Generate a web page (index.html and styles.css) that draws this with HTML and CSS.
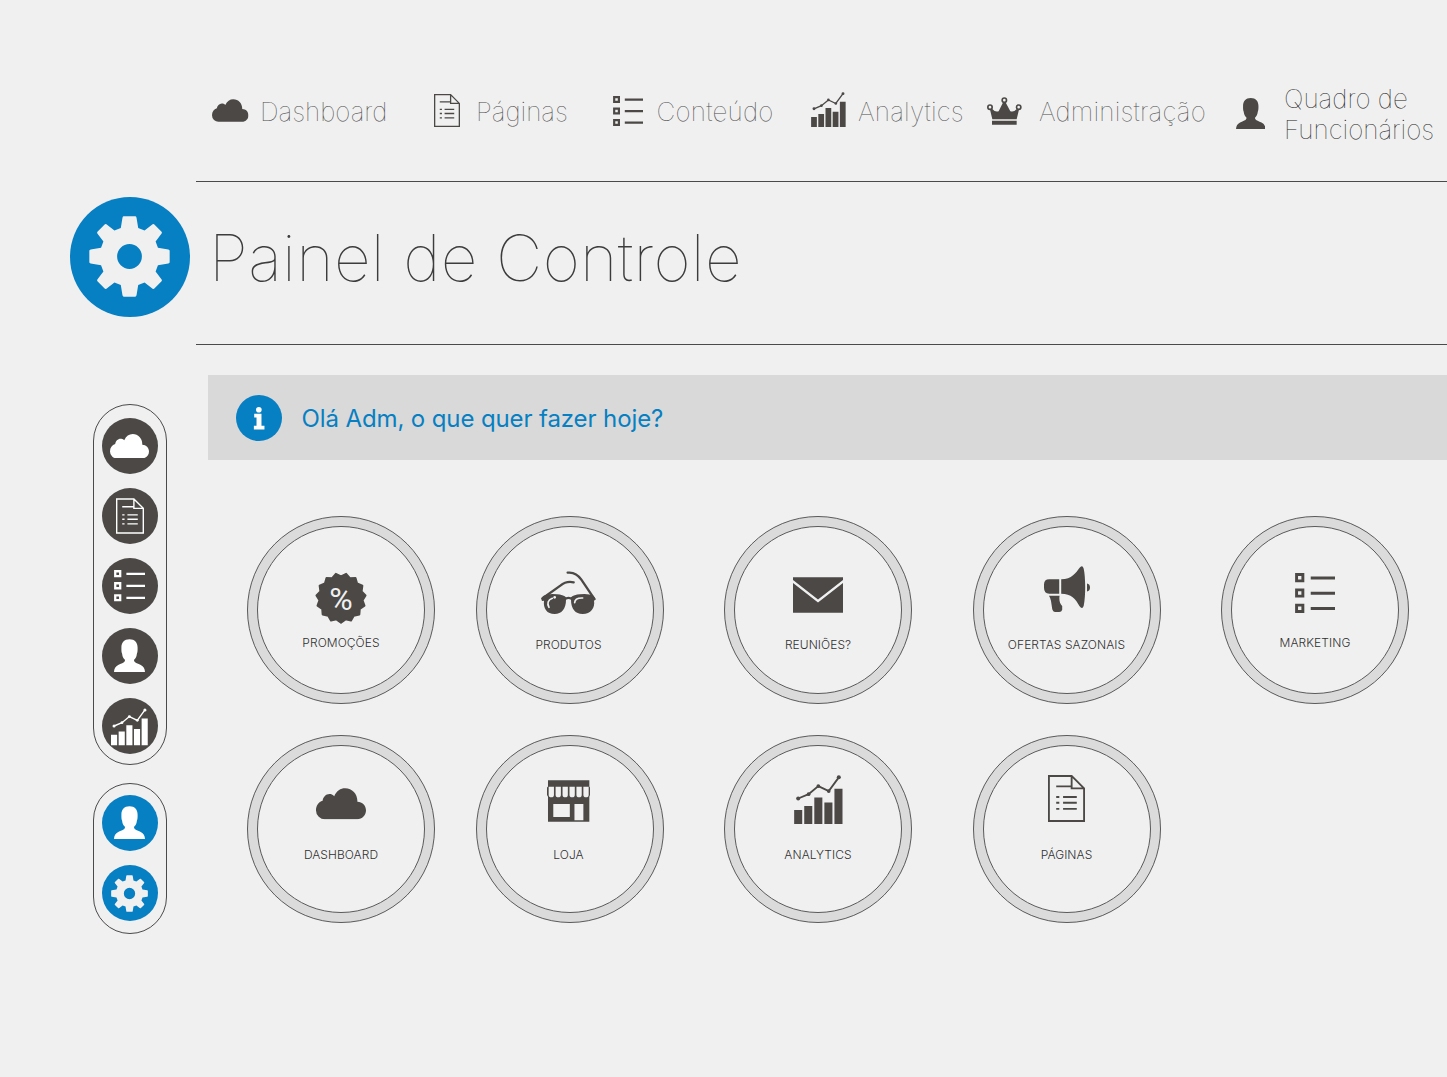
FILE: index.html
```html
<!DOCTYPE html>
<html lang="pt-BR">
<head>
<meta charset="utf-8">
<title>Painel de Controle</title>
<link rel="stylesheet" href="styles.css">
</head>
<body>
<svg class="sprite" aria-hidden="true">
  <symbol id="cloud" viewBox="0 0 151 94"><path d="M28 94A27 27 0 0 1 0 67C0 52 8 42 20 38C22 24 34 14 48 19C51 20 53 22 55 24C62 8 74 0 88 0C110 0 126 18 125 41C140 41 151 53 151 67C151 82 140 94 124 94Z"/></symbol>
  <symbol id="doc" viewBox="0 0 108 137"><path class="line" stroke-width="5.4" d="M2.700 2.700H69L105.300 39V134.300H2.700ZM69 2.700V39H105.300M24 33H69M24 64H33M44 64H84M24 81H33M44 81H84M24 99H33M44 99H84"/></symbol>
  <symbol id="list" viewBox="0 0 89 89"><path class="line" stroke-width="6.500" d="M3.500 3.500H17.500V17.500H3.500ZM3.500 37.500H17.500V51.500H3.500ZM3.500 71.500H17.500V85.500H3.500ZM35 11H89M35 45H89M35 79H89"/></symbol>
  <symbol id="chart" viewBox="0 0 145 146"><path d="M0 104H24V146H0ZM30 92H54V146H30ZM60 67H84V146H60ZM90 82H114V146H90ZM120 41H144V146H120Z"/><path class="line" stroke-width="5.500" d="M12 70L43 57L72 33L103 48L133 7"/><circle cx="12" cy="70" r="6"/><circle cx="43" cy="57" r="5.500"/><circle cx="72" cy="33" r="5.500"/><circle cx="103" cy="48" r="5.500"/><circle cx="133" cy="7" r="6"/></symbol>
  <symbol id="crown" viewBox="0 0 105 83"><g class="line" stroke-width="5"><circle cx="9" cy="30" r="6.500"/><circle cx="52" cy="9" r="6.500"/><circle cx="95" cy="30" r="6.500"/></g><path d="M9 37L15 35Q24 46 35 42L48 16H56L70 42Q81 46 90 35L96 37L89 66H16ZM15 71H89V83H15Z"/></symbol>
  <symbol id="person" viewBox="0 0 88 94"><path d="M44 0C29 0 21 9 21 24C21 32 21 36 23 41C24 50 27 55 31 58V62C29 67 19 70 12 73C4 77 0 84 0 94H88C88 84 84 77 76 73C69 70 59 67 57 62V58C61 55 64 50 65 41C67 36 67 32 67 24C67 9 59 0 44 0Z"/></symbol>
  <symbol id="gear" viewBox="-121 -121 242 242"><path fill-rule="evenodd" d="M-17 -120H17Q20 -120 21 -116L26 -85L45 -78L69 -96Q72 -98 75 -95L95 -75Q98 -72 96 -69L78 -45L85 -26L116 -21Q120 -20 120 -17V17Q120 20 116 21L85 26L78 45L96 69Q98 72 95 75L75 95Q72 98 69 96L45 78L26 85L21 116Q20 120 17 120H-17Q-20 120 -21 116L-26 85L-45 78L-69 96Q-72 98 -75 95L-95 75Q-98 72 -96 69L-78 45L-85 26L-116 21Q-120 20 -120 17V-17Q-120 -20 -116 -21L-85 -26L-78 -45L-96 -69Q-98 -72 -95 -75L-75 -95Q-72 -98 -69 -96L-45 -78L-26 -85L-21 -116Q-20 -120 -17 -120ZM37 0A37 37 0 1 0 -37 0A37 37 0 1 0 37 0Z"/></symbol>
</svg>

<div class="page">
  <header class="top">
    <div class="brand"><svg class="brand__gear"><use href="#gear"/></svg></div>
    <div class="top__main">
      <nav class="nav">
        <a class="nav__item nav__item--dashboard"><svg class="cloud"><use href="#cloud"/></svg><span>Dashboard</span></a>
        <a class="nav__item nav__item--pages"><svg class="doc"><use href="#doc"/></svg><span>Páginas</span></a>
        <a class="nav__item nav__item--content"><svg class="list"><use href="#list"/></svg><span>Conteúdo</span></a>
        <a class="nav__item nav__item--analytics"><svg class="chart"><use href="#chart"/></svg><span>Analytics</span></a>
        <a class="nav__item nav__item--admin"><svg class="crown"><use href="#crown"/></svg><span>Administração</span></a>
        <a class="nav__item nav__item--staff"><svg class="person"><use href="#person"/></svg><span>Quadro de<br>Funcionários</span></a>
      </nav>
      <div class="hero"><h1 class="hero__title">Painel de Controle</h1></div>
    </div>
  </header>

  <div class="body">
    <aside class="side">
      <div class="pill">
        <a class="dot"><svg class="cloud"><use href="#cloud"/></svg></a>
        <a class="dot"><svg class="doc"><use href="#doc"/></svg></a>
        <a class="dot"><svg class="list"><use href="#list"/></svg></a>
        <a class="dot"><svg class="person"><use href="#person"/></svg></a>
        <a class="dot"><svg class="chart"><use href="#chart"/></svg></a>
      </div>
      <div class="pill pill--short">
        <a class="dot dot--blue"><svg class="person"><use href="#person"/></svg></a>
        <a class="dot dot--blue"><svg class="gear"><use href="#gear"/></svg></a>
      </div>
    </aside>

    <main class="main">
      <div class="notice">
        <svg class="notice__icon" viewBox="0 0 139 139"><circle class="notice__disc" cx="69.500" cy="69.500" r="69.500"/><circle cx="69" cy="44.500" r="8.500"/><path d="M55 57H77V93H86V104H54V93H62V68H55Z"/></svg>
        <p class="notice__text">Olá Adm, o que quer fazer hoje?</p>
      </div>

      <div class="tiles">
        <a class="tile"><span class="tile__face tile__face--promo">
          <svg class="badge" viewBox="-78 -78 156 156"><path class="badge__edge" d="M0 74L13.500 64L30.100 67.600L38.200 53L55 49.500L56.300 33L70.400 22.900L64.700 7L73.600 -7.800L61.800 -20L64.100 -37L48.300 -43.500L43.500 -59.900L26.500 -59.400L15.400 -72.400L0 -65L-15.400 -72.400L-26.500 -59.400L-43.500 -59.900L-48.300 -43.500L-64.100 -37L-61.800 -20L-73.600 -7.800L-64.700 7L-70.400 22.900L-56.300 33L-55 49.500L-38.200 53L-30.100 67.600L-13.500 64Z"/><text class="badge__sign" x="0" y="35" text-anchor="middle">%</text></svg>
          <span class="tile__label">PROMOÇÕES</span></span></a>
        <a class="tile"><span class="tile__face tile__face--products">
          <svg class="glasses" viewBox="0 0 165 129"><path d="M0 82L8 74Q24 67 48 70Q66 71 75 79Q83 76 90 79Q99 71 117 70Q141 67 157 74L165 85L159 89C163 110 149 129 125 129C103 129 90 113 90 86Q83 82 75 86C75 113 62 129 41 129C18 129 6 112 9 89L3 90Z"/><path class="line" stroke-width="7" stroke-linecap="round" d="M6 81L58 44Q76 29 98 34M159 82L121 26Q105 2 80 5"/><path class="shine" d="M24 109Q14 90 34 82M101 95Q102 80 125 81"/><circle class="shine-dot" cx="41" cy="79" r="4"/></svg>
          <span class="tile__label">PRODUTOS</span></span></a>
        <a class="tile"><span class="tile__face tile__face--meetings">
          <svg class="mail" viewBox="0 0 151 107"><path d="M0 0H151V8L75.500 67L0 8ZM0 17L75.500 76L151 17V107H0Z"/></svg>
          <span class="tile__label">REUNIÕES?</span></span></a>
        <a class="tile"><span class="tile__face tile__face--offers">
          <svg class="horn" viewBox="0 0 139 139"><path d="M46 40V84H16Q0 84 0 66V56Q0 40 16 40ZM52 40C84 40 97 20 107 6Q116 -5 120 8C126 36 126 91 120 120Q116 133 107 121C95 99 83 84 52 84ZM130 53Q139 55 139 65Q139 75 130 77ZM15 90H47C45 105 48 114 55 121V132Q53 139 46 139H33Q27 139 25 131L21 105Q20 98 15 90Z"/></svg>
          <span class="tile__label">OFERTAS SAZONAIS</span></span></a>
        <a class="tile"><span class="tile__face tile__face--marketing">
          <svg class="list"><use href="#list"/></svg>
          <span class="tile__label">MARKETING</span></span></a>
        <a class="tile"><span class="tile__face tile__face--dashboard">
          <svg class="cloud"><use href="#cloud"/></svg>
          <span class="tile__label">DASHBOARD</span></span></a>
        <a class="tile"><span class="tile__face tile__face--store">
          <svg class="store" viewBox="0 0 130 126"><path fill-rule="evenodd" d="M3 0H128V19L130 22V45L128 50V126H3V50L0 45V22L3 19ZM5 20V44Q5 52 13 52Q21 52 21 44V20ZM26 20V44Q26 52 34 52Q42 52 42 44V20ZM47 20V44Q47 52 55 52Q63 52 63 44V20ZM68 20V44Q68 52 76 52Q84 52 84 44V20ZM89 20V44Q89 52 97 52Q105 52 105 44V20ZM110 20V44Q110 52 118 52Q126 52 126 44V20ZM19 72V111H69V72ZM83 72V121H110V72Z"/></svg>
          <span class="tile__label">LOJA</span></span></a>
        <a class="tile"><span class="tile__face tile__face--analytics">
          <svg class="chart"><use href="#chart"/></svg>
          <span class="tile__label">ANALYTICS</span></span></a>
        <a class="tile"><span class="tile__face tile__face--pages">
          <svg class="doc"><use href="#doc"/></svg>
          <span class="tile__label">PÁGINAS</span></span></a>
      </div>
    </main>
  </div>
</div>
</body>
</html>
```
FILE: styles.css
```css
:root {
  --bg: #f0f0f0;
  --ink: #4b4846;
  --blue: #067fc3;
  --grey: #d9d9d9;
}
* { box-sizing: border-box; }
body {
  margin: 0;
  background: var(--bg);
  color: #333;
  font-family: Inter, "Liberation Sans", sans-serif;
  overflow: hidden;
}
svg { display: block; flex: none; fill: currentColor; }
.sprite { position: absolute; width: 0; height: 0; }
.line { fill: none; stroke: currentColor; }
.page { height: 1077px; overflow: hidden; }

/* header */
.top { display: flex; height: 345px; }
.brand {
  flex: none;
  display: flex;
  align-items: center;
  justify-content: center;
  width: 120px;
  height: 120px;
  margin: 196.500px 6px 0 69.500px;
  border-radius: 50%;
  background: var(--blue);
  color: var(--bg);
}
.brand__gear { width: 81px; height: 81px; }
.top__main { flex: 1; min-width: 0; }
.nav {
  display: grid;
  grid-template-columns: 221px 179px 198px 177px 248px 212px;
  height: 182px;
  padding-left: 16.500px;
  border-bottom: 1px solid #4a4a4a;
}
.nav__item {
  display: flex;
  align-items: flex-start;
  color: var(--ink);
  font-size: 26px;
  font-weight: 100;
  line-height: 31px;
  white-space: nowrap;
}
.nav__item span { margin-top: 96px; color: #4c4c4c; }
.nav .cloud { width: 36.500px; height: 23px; margin: 99px 11.500px 0 0; }
.nav .doc { width: 26px; height: 33px; margin: 94px 16.500px 0 .5px; }
.nav .list { width: 30px; height: 30px; margin: 95.500px 14px 0 .5px; }
.nav .chart { width: 35px; height: 35px; margin: 92px 12.500px 0 .500px; }
.nav .crown { width: 35px; height: 28px; margin: 96.500px 17px 0 0; }
.nav .person { width: 29.500px; height: 31.500px; margin: 97.500px 19px 0 .5px; }
.nav__item--content span, .nav__item--analytics span, .nav__item--admin span { letter-spacing: .2px; }
.nav__item--staff span { margin-top: 83px; color: #222; }
.hero { height: 163.400px; border-bottom: 1px solid #4a4a4a; padding: 36px 0 0 13.500px; }
.hero__title { margin: 0; color: #3c3c3c; font-size: 64px; font-weight: 100; line-height: 80px; letter-spacing: .32px; white-space: nowrap; }

/* content */
.body { display: flex; }
.side { flex: none; width: 74px; margin: 59px 41px 0 93px; }
.pill {
  display: flex;
  flex-direction: column;
  align-items: center;
  gap: 14px;
  height: 361px;
  padding-top: 13px;
  border: 1px solid #4a4a4a;
  border-radius: 38px;
}
.pill--short { height: 151px; margin-top: 18px; padding-top: 11px; }
.dot {
  flex: none;
  display: flex;
  align-items: center;
  justify-content: center;
  width: 56px;
  height: 56px;
  padding-right: 1px;
  border-radius: 50%;
  background: var(--ink);
  color: #fff;
}
.dot--blue { background: var(--blue); }
.dot .cloud { width: 39px; height: 24.500px; }
.dot .doc { width: 28px; height: 36px; }
.dot .list { width: 31.500px; height: 31.500px; }
.dot .person { width: 31px; height: 33.500px; margin-bottom: 1px; }
.dot .chart { width: 37px; height: 37.500px; margin-top: 2px; }
.dot .gear { width: 37px; height: 37px; color: var(--bg); }
.main { flex: 1; min-width: 0; padding-top: 30px; }
.notice {
  display: flex;
  align-items: center;
  gap: 19.500px;
  height: 85px;
  padding: 1px 0 0 28px;
  background: var(--grey);
}
.notice__icon { width: 46px; height: 46px; color: #fff; }
.notice__disc { fill: var(--blue); }
.notice__text { margin: 0; color: var(--blue); font-size: 24px; font-weight: 400; letter-spacing: -.11px; white-space: nowrap; }
.tiles {
  display: grid;
  grid-template-columns: 228.500px 248.500px 248.500px 248.500px 188px;
  grid-auto-rows: 188px;
  row-gap: 30.500px;
  padding: 56px 0 0 39px;
}
.tile {
  width: 188px;
  height: 188px;
  padding: 9px;
  border: 1px solid #5a5a5a;
  border-radius: 50%;
  background: #dbdbdb;
}
.tile__face {
  display: flex;
  flex-direction: column;
  align-items: center;
  height: 168px;
  border: 1px solid #5a5a5a;
  border-radius: 50%;
  background: var(--bg);
  color: var(--ink);
}
.tile__label { margin-top: auto; color: #303030; font-size: 12px; font-weight: 300; line-height: 16px; letter-spacing: .06px; white-space: nowrap; }
.tile__face--promo, .tile__face--marketing { padding-bottom: 42px; }
.tile__face--products, .tile__face--meetings, .tile__face--offers { padding-bottom: 40px; }
.tile__face--dashboard, .tile__face--store, .tile__face--analytics, .tile__face--pages { padding-bottom: 48.400px; }
.tile__face--products, .tile__face--store { padding-right: 2px; }
.badge { width: 52px; height: 52px; margin-top: 44.500px; }
.badge__edge { stroke: currentColor; stroke-width: 6; stroke-linejoin: round; }
.badge__sign { fill: var(--bg); font: 400 96px Roboto, sans-serif; }
.glasses { width: 55px; height: 43px; margin-top: 44px; }
.shine { fill: none; stroke: var(--bg); stroke-width: 5; stroke-linecap: round; }
.shine-dot { fill: var(--bg); }
.mail { width: 50px; height: 36px; margin-top: 50px; }
.horn { width: 46px; height: 46px; margin-top: 39px; }
.tile .list { width: 40px; height: 40px; margin-top: 45.500px; }
.tile .cloud { width: 50px; height: 31.500px; margin-top: 42.500px; }
.store { width: 43px; height: 42px; margin-top: 34px; }
.tile .chart { width: 49px; height: 49px; margin-top: 29.500px; }
.tile .doc { width: 37px; height: 47px; margin-top: 29px; }
```
